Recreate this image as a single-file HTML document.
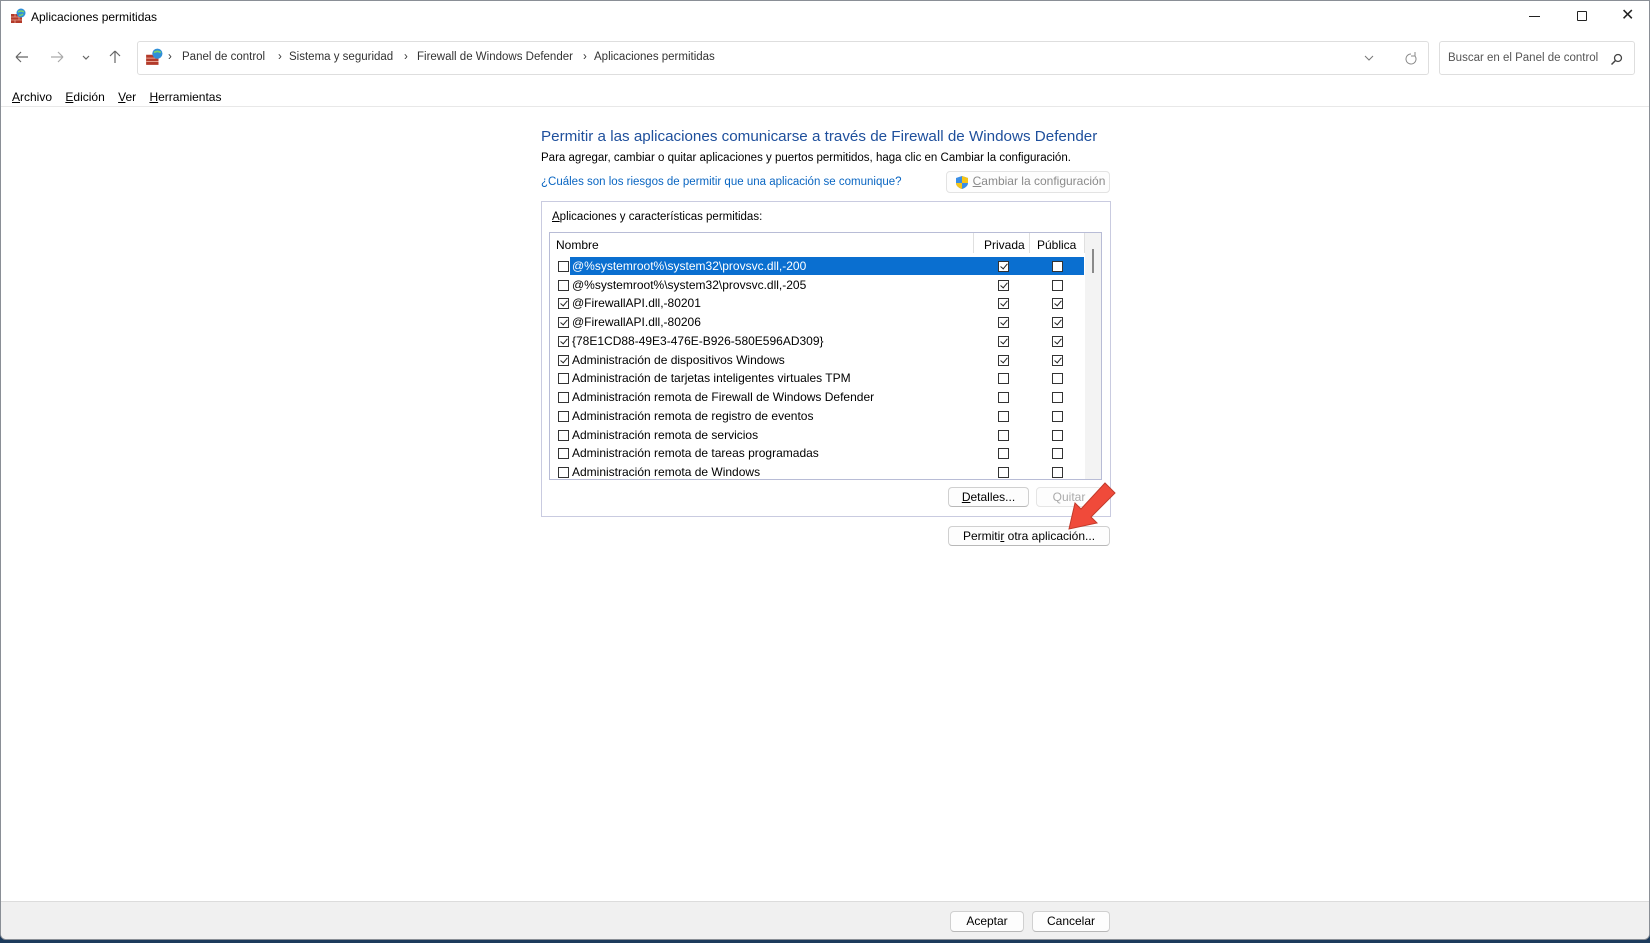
<!DOCTYPE html>
<html><head><meta charset="utf-8"><style>
*{margin:0;padding:0;box-sizing:border-box}
body{width:1650px;height:943px;background:#1d3b5c;font-family:"Liberation Sans",sans-serif;font-size:12px;color:#000;position:relative;overflow:hidden}
.win{position:absolute;left:0;top:0;width:1650px;height:940px;background:#fff;border:1px solid #8a8f96;border-radius:0 0 6px 6px;overflow:hidden}
.a{position:absolute;white-space:nowrap}
.btn{position:absolute;border:1px solid #d0d0d0;border-bottom-color:#b8b8b8;border-radius:4px;background:#fdfdfd;text-align:center;line-height:19px;font-size:12px}
.cb{position:absolute;width:11px;height:11px;border:1px solid #333;background:#fff}
.cb.c::after{content:"";position:absolute;left:3px;top:0px;width:3px;height:6px;border:solid #222;border-width:0 1.5px 1.5px 0;transform:rotate(40deg)}
u{text-decoration:underline}
.bc{position:absolute;top:50px;color:#333;font-size:11.5px;white-space:nowrap}
</style></head><body>
<div class="win">
<svg class="a" style="left:9px;top:7px" width="16" height="16" viewBox="0 0 16 16"><rect x="1" y="6" width="11" height="9" fill="#b33a2a"/><path d="M1 9h11M1 12h11M5 6v3M9 9v3M5 12v3" stroke="#e8a090" stroke-width=".8"/><circle cx="11" cy="5" r="4.5" fill="#2f8fd8"/><path d="M8 4q3-2 6 0M9 7q2 1 4-1" stroke="#7bd36a" stroke-width="1.5" fill="none"/></svg>
<div class="a" style="left:30px;top:9px;font-size:12px">Aplicaciones permitidas</div>
<div class="a" style="left:1528px;top:15px;width:11px;height:1px;background:#222"></div>
<div class="a" style="left:1576px;top:10px;width:10px;height:10px;border:1px solid #222;border-radius:1px"></div>
<div class="a" style="left:1620px;top:4px;font-size:16px;color:#222">✕</div>
<svg class="a" style="left:12px;top:48px" width="110" height="16" viewBox="0 0 110 16"><path d="M3 8h12M3 8l5-5M3 8l5 5" stroke="#666" stroke-width="1.2" fill="none"/><path d="M50 8H38M50 8l-5-5M50 8l-5 5" stroke="#aaa" stroke-width="1.2" fill="none"/><path d="M70 7l3 3 3-3" stroke="#666" stroke-width="1.2" fill="none"/><path d="M102 2v12M102 2l-5 5M102 2l5 5" stroke="#666" stroke-width="1.2" fill="none"/></svg>
<div class="a" style="left:136px;top:40px;width:1292px;height:34px;border:1px solid #dedede;border-radius:3px"></div>
<svg class="a" style="left:144px;top:47px" width="18" height="18" viewBox="0 0 16 16"><rect x="1" y="6" width="11" height="9" fill="#b33a2a"/><path d="M1 9h11M1 12h11" stroke="#e8a090" stroke-width=".8"/><circle cx="11" cy="5" r="4.5" fill="#2f8fd8"/><path d="M8 4q3-2 6 0" stroke="#7bd36a" stroke-width="1.5" fill="none"/></svg>
<div class="bc" style="left:167px">›</div>
<div class="bc" style="left:181px">Panel de control</div>
<div class="bc" style="left:277px">›</div>
<div class="bc" style="left:288px">Sistema y seguridad</div>
<div class="bc" style="left:403px">›</div>
<div class="bc" style="left:416px">Firewall de Windows Defender</div>
<div class="bc" style="left:582px">›</div>
<div class="bc" style="left:593px">Aplicaciones permitidas</div>
<svg class="a" style="left:1362px;top:50px" width="60" height="14" viewBox="0 0 60 14"><path d="M2 5l4 4 4-4" stroke="#777" fill="none"/><path d="M48 3a5 5 0 1 0 4 2M52 1v4h-4" stroke="#888" fill="none"/></svg>
<div class="a" style="left:1438px;top:40px;width:196px;height:34px;border:1px solid #dedede;border-radius:3px"></div>
<div class="a" style="left:1447px;top:51px;color:#555;font-size:11.5px">Buscar en el Panel de control</div>
<svg class="a" style="left:1609px;top:52px" width="13" height="13" viewBox="0 0 13 13"><circle cx="8" cy="5" r="3.5" stroke="#444" fill="none" stroke-width="1.3"/><path d="M5.5 7.5L1.5 11.5" stroke="#444" stroke-width="1.5"/></svg>
<div class="a" style="left:11px;top:89px"><u>A</u>rchivo &nbsp;&nbsp;&nbsp;<u>E</u>dición &nbsp;&nbsp;&nbsp;<u>V</u>er &nbsp;&nbsp;&nbsp;<u>H</u>erramientas</div>
<div class="a" style="left:0;top:105px;width:1650px;height:1px;background:#e8e8e8"></div>
<div class="a" style="left:540px;top:127px;font-size:15.2px;color:#1e4f9c">Permitir a las aplicaciones comunicarse a través de Firewall de Windows Defender</div>
<div class="a" style="left:540px;top:151px;font-size:11.5px">Para agregar, cambiar o quitar aplicaciones y puertos permitidos, haga clic en Cambiar la configuración.</div>
<div class="a" style="left:540px;top:175px;font-size:11.5px;color:#0a66c2">¿Cuáles son los riesgos de permitir que una aplicación se comunique?</div>
<div class="btn" style="left:945px;top:170px;width:164px;height:22px;color:#8a8a8a;border-color:#e3e3e3">
<svg style="position:absolute;left:8px;top:3px" width="14" height="15" viewBox="0 0 14 15"><path d="M7 1l6 2v5c0 3-3 5-6 6-3-1-6-3-6-6V3z" fill="#3a8ee6"/><path d="M7 1l6 2v5H7z" fill="#f5c518"/><path d="M7 8v6c-3-1-6-3-6-6z" fill="#f5c518"/></svg>
<span style="margin-left:22px"><u>C</u>ambiar la configuración</span></div>
<div class="a" style="left:540px;top:200px;width:570px;height:316px;border:1px solid #c9cbe0"></div>
<div class="a" style="left:551px;top:210px;font-size:11.5px"><u>A</u>plicaciones y características permitidas:</div>
<div class="a" style="left:548px;top:231px;width:553px;height:248px;border:1px solid #b8bcd6"></div>
<div class="a" style="left:1084px;top:232px;width:16px;height:246px;background:#f3f3f3"></div>
<div class="a" style="left:1091px;top:248px;width:2px;height:24px;background:#8a8a8a"></div>
<div class="a" style="left:555px;top:237px">Nombre</div>
<div class="a" style="left:972px;top:232px;width:1px;height:20px;background:#e0e0e0"></div>
<div class="a" style="left:1028px;top:232px;width:1px;height:20px;background:#e0e0e0"></div>
<div class="a" style="left:1083px;top:232px;width:1px;height:20px;background:#e0e0e0"></div>
<div class="a" style="left:983px;top:237px">Privada</div>
<div class="a" style="left:1036px;top:237px">Pública</div>
<div class="a" style="left:569px;top:256px;width:514px;height:18px;background:#0a6fd0"></div>
<div id="rows"></div>
<div class="btn" style="left:947px;top:486px;width:81px;height:20px"><u>D</u>etalles...</div>
<div class="btn" style="left:1035px;top:486px;width:66px;height:20px;color:#aaa;border-color:#e5e5e5">Quitar</div>
<div class="btn" style="left:947px;top:525px;width:162px;height:20px">Permiti<u>r</u> otra aplicación...</div>
<svg class="a" style="left:1060px;top:476px" width="60" height="58" viewBox="0 0 60 58"><path d="M8 52 L14 26 L20 32 L44 6 L54 16 L30 40 L36 46 Z" fill="#f04a3a" stroke="#c23a2a" stroke-width="1"/></svg>
<div class="a" style="left:0;top:900px;width:1650px;height:40px;background:#f0f0f0;border-top:1px solid #dcdcdc"></div>
<div class="btn" style="left:949px;top:910px;width:74px;height:21px">Aceptar</div>
<div class="btn" style="left:1031px;top:910px;width:78px;height:21px">Cancelar</div>
</div>
<script>
var r=[["@%systemroot%\\system32\\provsvc.dll,-200",0,1,0],["@%systemroot%\\system32\\provsvc.dll,-205",0,1,0],["@FirewallAPI.dll,-80201",1,1,1],["@FirewallAPI.dll,-80206",1,1,1],["{78E1CD88-49E3-476E-B926-580E596AD309}",1,1,1],["Administración de dispositivos Windows",1,1,1],["Administración de tarjetas inteligentes virtuales TPM",0,0,0],["Administración remota de Firewall de Windows Defender",0,0,0],["Administración remota de registro de eventos",0,0,0],["Administración remota de servicios",0,0,0],["Administración remota de tareas programadas",0,0,0],["Administración remota de Windows",0,0,0]];
var h="";r.forEach(function(x,i){var t=Math.round(265+i*18.74);
h+='<div class="cb'+(x[1]?' c':'')+'" style="left:557px;top:'+(t-5)+'px"></div>';
h+='<div class="a" style="left:571px;top:'+(t-7)+'px;'+(i==0?'color:#fff;':'')+'">'+x[0]+'</div>';
h+='<div class="cb'+(x[2]?' c':'')+'" style="left:997px;top:'+(t-5)+'px"></div>';
h+='<div class="cb'+(x[3]?' c':'')+'" style="left:1051px;top:'+(t-5)+'px"></div>';});
document.getElementById("rows").outerHTML=h;
</script>
</body></html>
